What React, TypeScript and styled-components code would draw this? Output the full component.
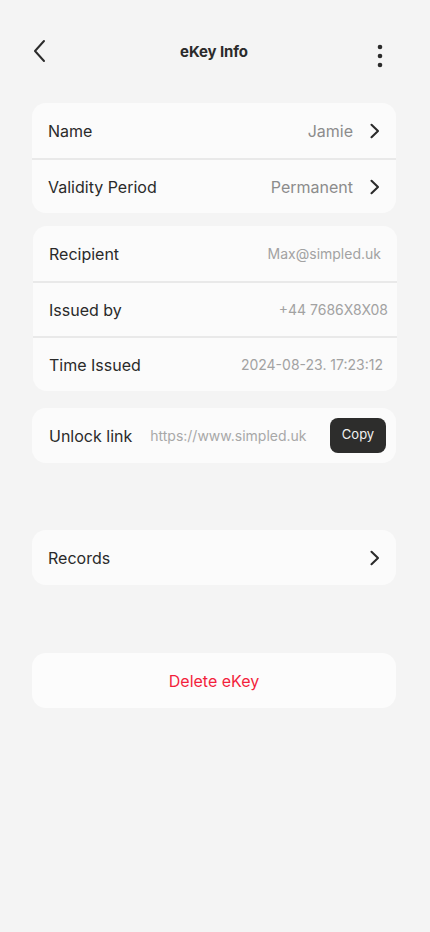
import React from 'react';
import styled, { createGlobalStyle } from 'styled-components';

const GlobalStyle = createGlobalStyle`
  html, body {
    margin: 0;
    padding: 0;
    background: #f4f4f4;
    font-family: Inter, 'Noto Sans', sans-serif;
    -webkit-font-smoothing: antialiased;
  }
`;

const Page = styled.div`
  width: 430px;
  min-height: 932px;
  background: #f4f4f4;
  display: flex;
  flex-direction: column;
  padding: 24px 34px 40px 32px;
  box-sizing: border-box;
`;

const Header = styled.header`
  height: 54px;
  display: flex;
  align-items: center;
  justify-content: space-between;
  position: relative;
  margin-bottom: 25px;
`;

const IconButton = styled.button`
  border: 0;
  background: transparent;
  padding: 0;
  width: 28px;
  height: 28px;
  display: flex;
  align-items: center;
  justify-content: center;
  color: #2b2b2b;
`;

const BackButton = styled(IconButton)`
  margin-left: -7px;
`;

const MoreButton = styled(IconButton)`
  margin-top: 10px;
  margin-right: 2px;
`;

const Title = styled.h1`
  margin: 0;
  font-size: 15px;
  font-weight: 700;
  color: #2b2b2b;
  letter-spacing: -0.1px;
  position: absolute;
  left: 0;
  right: 0;
  text-align: center;
  pointer-events: none;
`;

const Card = styled.section<{ $gap: number; $shift?: number }>`
  background: #fbfbfb;
  border-radius: 14px;
  display: flex;
  flex-direction: column;
  overflow: hidden;
  margin-bottom: ${p => p.$gap}px;
  margin-left: ${p => p.$shift ?? 0}px;
  margin-right: ${p => -(p.$shift ?? 0)}px;
`;

const Row = styled.div<{ $right?: number }>`
  height: 55px;
  box-sizing: border-box;
  display: flex;
  align-items: center;
  padding: 0 ${p => p.$right ?? 16}px 0 16px;
  & + & {
    border-top: 2px solid #e9e9e9;
  }
`;

const Label = styled.span<{ $indent?: number }>`
  font-size: 16px;
  color: #2a2a2a;
  flex: 0 0 auto;
  margin-left: ${p => p.$indent ?? 0}px;
`;

const Value = styled.span<{ $small?: boolean }>`
  margin-left: auto;
  font-size: ${p => (p.$small ? 14 : 16)}px;
  color: ${p => (p.$small ? '#a2a2a2' : '#8c8c8c')};
  white-space: nowrap;
`;

const LinkText = styled.span`
  margin-left: 18px;
  font-size: 14px;
  color: #a8a8a8;
  flex: 1 1 auto;
  white-space: nowrap;
  overflow: hidden;
`;

const CopyButton = styled.button`
  border: 0;
  background: #2d2d2c;
  color: #f2f2f2;
  border-radius: 8px;
  width: 56px;
  height: 35px;
  font-family: inherit;
  font-size: 13px;
  padding: 0 0 4px;
`;

const Chevron = styled.span`
  margin-left: 17px;
  display: flex;
  color: #2b2b2b;
`;

const DangerRow = styled.button`
  height: 55px;
  border: 0;
  background: #fcfcfc;
  border-radius: 14px;
  font-family: inherit;
  font-size: 16px;
  color: #f31f3c;
`;

const ChevronIcon = () => (
  <Chevron>
    <svg width="10" height="16" viewBox="0 0 10 16" fill="none">
      <path d="M1.5 1.8l6.5 6.2-6.5 6.2" stroke="currentColor" strokeWidth="2.1" strokeLinecap="round" strokeLinejoin="round" />
    </svg>
  </Chevron>
);

interface InfoRowProps {
  label: string;
  value?: string;
  small?: boolean;
  chevron?: boolean;
  right?: number;
}

const InfoRow = ({ label, value, small, chevron, right }: InfoRowProps) => (
  <Row $right={right}>
    <Label>{label}</Label>
    {value ? <Value $small={small}>{value}</Value> : <Value />}
    {chevron && <ChevronIcon />}
  </Row>
);

export default function App() {
  return (
    <>
      <GlobalStyle />
      <Page>
        <Header>
          <BackButton aria-label="Back">
            <svg width="14" height="24" viewBox="0 0 14 24" fill="none">
              <path d="M12 2L3 12l9 10" stroke="currentColor" strokeWidth="2" strokeLinecap="round" strokeLinejoin="round" />
            </svg>
          </BackButton>
          <Title>eKey Info</Title>
          <MoreButton aria-label="More">
            <svg width="6" height="24" viewBox="0 0 6 24" fill="currentColor">
              <circle cx="3" cy="3" r="2.3" />
              <circle cx="3" cy="12" r="2.3" />
              <circle cx="3" cy="21" r="2.3" />
            </svg>
          </MoreButton>
        </Header>

        <Card $gap={13}>
          <InfoRow label="Name" value="Jamie" chevron right={16} />
          <InfoRow label="Validity Period" value="Permanent" chevron right={16} />
        </Card>

        <Card $gap={17} $shift={1}>
          <InfoRow label="Recipient" value="Max@simpled.uk" small right={16} />
          <InfoRow label="Issued by" value="+44 7686X8X08" small right={9} />
          <InfoRow label="Time Issued" value="2024-08-23. 17:23:12" small right={14} />
        </Card>

        <Card $gap={67}>
          <Row $right={10}>
            <Label $indent={1}>Unlock link</Label>
            <LinkText>https://www.simpled.uk</LinkText>
            <CopyButton>Copy</CopyButton>
          </Row>
        </Card>

        <Card $gap={68}>
          <InfoRow label="Records" chevron right={16} />
        </Card>

        <DangerRow>Delete eKey</DangerRow>
      </Page>
    </>
  );
}
